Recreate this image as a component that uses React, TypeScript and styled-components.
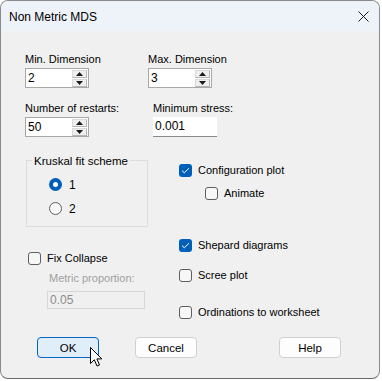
import React from 'react'
import styled, { createGlobalStyle } from 'styled-components'

const Global = createGlobalStyle`
  html, body {
    margin: 0;
    padding: 0;
    background: #ffffff;
  }
  body {
    font-family: "Liberation Sans", Arial, sans-serif;
    font-size: 11px;
    color: #000;
  }
`

const SpinField = ({ value }: { value: string }) => (
  <SpinBox>
    <SpinText>{value}</SpinText>
    <Spinner>
      <SpinBtn>
        <svg width="7" height="4" viewBox="0 0 7 4"><path d="M3.5 0 L7 4 L0 4 Z" fill="#1a1a1a" /></svg>
      </SpinBtn>
      <SpinBtn>
        <svg width="7" height="4" viewBox="0 0 7 4"><path d="M0 0 L7 0 L3.5 4 Z" fill="#1a1a1a" /></svg>
      </SpinBtn>
    </Spinner>
  </SpinBox>
)

const Check = ({ on }: { on?: boolean }) => (
  <Box $on={on}>
    {on ? (
      <svg width="9" height="7" viewBox="0 0 9 7">
        <path d="M1 3.6 L3.3 5.8 L8 1.2" fill="none" stroke="#fff" strokeWidth="1" />
      </svg>
    ) : null}
  </Box>
)

const App = () => {
  return (
    <>
      <Global />
      <Window>
        <TitleBar>
          <Title>Non Metric MDS</Title>
          <Close>
            <svg width="11" height="11" viewBox="0 0 11 11">
              <path d="M0.5 0.5 L10.5 10.5 M10.5 0.5 L0.5 10.5" stroke="#1b1b1b" strokeWidth="1" />
            </svg>
          </Close>
        </TitleBar>
        <Body>
          <FieldRow $top={21}>
            <Field>
              <Label>Min. Dimension</Label>
              <SpinField value="2" />
            </Field>
            <Field $left={59}>
              <Label>Max. Dimension</Label>
              <SpinField value="3" />
            </Field>
          </FieldRow>
          <FieldRow $top={13}>
            <Field>
              <Label>Number of restarts:</Label>
              <SpinField value="50" />
            </Field>
            <Field $left={64}>
              <Label>Minimum stress:</Label>
              <EditBox>0.001</EditBox>
            </Field>
          </FieldRow>

          <Middle>
            <LeftCol>
              <Group>
                <Legend>Kruskal fit scheme</Legend>
                <RadioRow>
                  <Radio $on />
                  <span>1</span>
                </RadioRow>
                <RadioRow $top={11}>
                  <Radio />
                  <span>2</span>
                </RadioRow>
              </Group>
              <CheckRow $top={25} $left={3}>
                <Check />
                <span>Fix Collapse</span>
              </CheckRow>
              <DimLabel>Metric proportion:</DimLabel>
              <DimBox>0.05</DimBox>
            </LeftCol>
            <RightCol>
              <CheckRow>
                <Check on />
                <span>Configuration plot</span>
              </CheckRow>
              <CheckRow $top={10} $left={26}>
                <Check />
                <span>Animate</span>
              </CheckRow>
              <CheckRow $top={39}>
                <Check on />
                <span>Shepard diagrams</span>
              </CheckRow>
              <CheckRow $top={17}>
                <Check />
                <span>Scree plot</span>
              </CheckRow>
              <CheckRow $top={24}>
                <Check />
                <span>Ordinations to worksheet</span>
              </CheckRow>
            </RightCol>
          </Middle>

          <Buttons>
            <Button $primary $left={12}>OK</Button>
            <Button $left={36}>Cancel</Button>
            <Button $left={82}>Help</Button>
          </Buttons>
          <Cursor width="13" height="20" viewBox="0 0 13 20">
            <path d="M0.5 0.5 L0.5 16.5 L4.3 12.8 L7 19 L9.5 18 L6.9 11.9 L11.8 11.9 Z" fill="#fff" stroke="#000" strokeWidth="1" strokeLinejoin="round" />
          </Cursor>
        </Body>
      </Window>
    </>
  )
}

export default App

const Window = styled.div`
  width: 380px;
  height: 379px;
  box-sizing: border-box;
  border: 1px solid #8a8a8a;
  border-bottom-color: #6a6a6a;
  border-radius: 8px;
  overflow: hidden;
  background: #f0f0f0;
  display: flex;
  flex-direction: column;
`
const TitleBar = styled.div`
  height: 30px;
  flex: none;
  background: #eef2f9;
  display: flex;
  align-items: center;
  justify-content: space-between;
  padding-left: 8px;
  padding-right: 9px;
`
const Title = styled.div`
  font-size: 12px;
  line-height: 14px;
  color: #000;
  margin-top: 1px;
`
const Close = styled.div`
  width: 11px;
  height: 11px;
  display: flex;
  margin-right: 1px;
`
const Body = styled.div`
  flex: 1;
  position: relative;
  padding-left: 24px;
  display: flex;
  flex-direction: column;
`
const FieldRow = styled.div<{ $top?: number }>`
  display: flex;
  margin-top: ${p => p.$top || 0}px;
`
const Field = styled.div<{ $left?: number }>`
  width: 64px;
  flex: none;
  display: flex;
  flex-direction: column;
  margin-left: ${p => p.$left || 0}px;
`
const Label = styled.div`
  line-height: 14px;
  height: 14px;
  margin-bottom: 2px;
  white-space: nowrap;
`
const SpinBox = styled.div`
  width: 64px;
  height: 20px;
  box-sizing: border-box;
  border: 1px solid #a8a8a8;
  background: #fff;
  display: flex;
  align-items: center;
  justify-content: space-between;
`
const SpinText = styled.span`
  padding-left: 2px;
  font-size: 12px;
`
const Spinner = styled.div`
  display: flex;
  flex-direction: column;
  gap: 1px;
  margin-right: 1px;
`
const SpinBtn = styled.div`
  width: 15px;
  height: 8px;
  box-sizing: border-box;
  background: #efefef;
  border: 1px solid #dadada;
  border-right-color: #b5b5b5;
  border-bottom-color: #b5b5b5;
  display: flex;
  align-items: center;
  justify-content: center;
`
const EditBox = styled.div`
  width: 64px;
  height: 20px;
  box-sizing: border-box;
  background: #fff;
  border-bottom: 1px solid #8a8a8a;
  padding-left: 2px;
  font-size: 12px;
  line-height: 19px;
`
const Middle = styled.div`
  display: flex;
  margin-top: 23px;
`
const LeftCol = styled.div`
  width: 154px;
  display: flex;
  flex-direction: column;
`
const RightCol = styled.div`
  display: flex;
  flex-direction: column;
  padding-top: 4px;
`
const Group = styled.div`
  position: relative;
  margin-left: 1px;
  width: 122px;
  height: 67px;
  box-sizing: border-box;
  border: 1px solid #dcdcdc;
  padding-top: 17px;
  padding-left: 22px;
`
const Legend = styled.span`
  position: absolute;
  top: -7px;
  left: 5px;
  padding: 0 2px;
  background: #f0f0f0;
  line-height: 14px;
  font-size: 11.5px;
`
const RadioRow = styled.div<{ $top?: number }>`
  display: flex;
  align-items: center;
  gap: 7px;
  height: 13px;
  margin-top: ${p => p.$top || 0}px;
  font-size: 12px;
`
const Radio = styled.div<{ $on?: boolean }>`
  width: 13px;
  height: 13px;
  box-sizing: border-box;
  border-radius: 50%;
  background: ${p => (p.$on ? '#005fb8' : '#f7f7f7')};
  border: ${p => (p.$on ? 'none' : '1px solid #5f5f5f')};
  display: flex;
  align-items: center;
  justify-content: center;
  &::after {
    content: '';
    display: ${p => (p.$on ? 'block' : 'none')};
    width: 5px;
    height: 5px;
    border-radius: 50%;
    background: #fff;
  }
`
const CheckRow = styled.div<{ $top?: number; $left?: number }>`
  display: flex;
  align-items: center;
  gap: 6px;
  height: 13px;
  line-height: 13px;
  margin-top: ${p => p.$top || 0}px;
  margin-left: ${p => p.$left || 0}px;
  white-space: nowrap;
`
const Box = styled.div<{ $on?: boolean }>`
  width: 13px;
  height: 13px;
  flex: none;
  box-sizing: border-box;
  border-radius: 3px;
  background: ${p => (p.$on ? '#005fb8' : '#f7f7f7')};
  border: ${p => (p.$on ? 'none' : '1px solid #5f5f5f')};
  display: flex;
  align-items: center;
  justify-content: center;
`
const DimLabel = styled.div`
  color: #a0a0a0;
  line-height: 14px;
  margin-top: 6px;
  margin-left: 24px;
`
const DimBox = styled.div`
  width: 98px;
  height: 18px;
  box-sizing: border-box;
  margin-top: 6px;
  margin-left: 22px;
  border: 1px solid #d6d6d6;
  color: #8c8c8c;
  padding-left: 2px;
  line-height: 16px;
  font-size: 12px;
`
const Buttons = styled.div`
  display: flex;
  margin-top: 18px;
`
const Button = styled.div<{ $primary?: boolean; $left?: number }>`
  width: 62px;
  height: 21px;
  box-sizing: border-box;
  margin-left: ${p => p.$left || 0}px;
  border-radius: 4px;
  border: 1px solid ${p => (p.$primary ? '#0067c0' : '#d0d0d0')};
  background: ${p => (p.$primary ? '#e0eef9' : '#fdfdfd')};
  display: flex;
  align-items: center;
  justify-content: center;
  font-size: 11.5px;
`
const Cursor = styled.svg`
  position: absolute;
  left: 89px;
  top: 316px;
`
